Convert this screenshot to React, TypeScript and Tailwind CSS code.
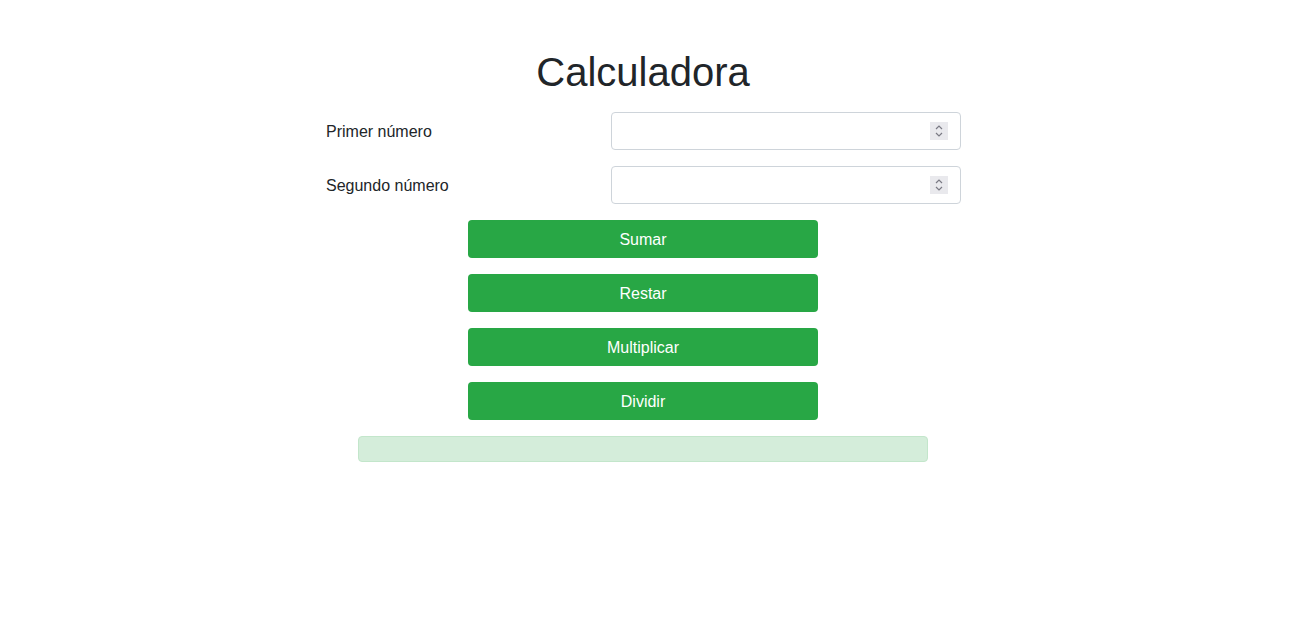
import { useState } from "react";

function NumberField({ value, onChange }: { value: string; onChange: (v: string) => void }) {
  return (
    <div className="relative w-[350px] h-[38px]">
      <input
        type="text"
        value={value}
        onChange={(e) => onChange(e.target.value)}
        className="w-full h-full border border-[#ced4da] rounded-[4px] px-3 text-base text-[#495057] outline-none"
      />
      {/* spinner */}
      <div className="absolute left-[319px] top-[10px] w-[18px] h-[18px] bg-[#e9e9ed] flex items-center justify-center">
        <svg width="10" height="14" viewBox="0 0 10 14" fill="none" stroke="#7a7a84" strokeWidth="1.2">
          <path d="M2 5 L5 2 L8 5" />
          <path d="M2 9 L5 12 L8 9" />
        </svg>
      </div>
    </div>
  );
}

const ops = ["Sumar", "Restar", "Multiplicar", "Dividir"];

export default function App() {
  const [a, setA] = useState("");
  const [b, setB] = useState("");
  const [result, setResult] = useState("");

  const onOp = (op: string) => {
    const x = parseFloat(a);
    const y = parseFloat(b);
    if (isNaN(x) || isNaN(y)) return;
    if (op === "Sumar") setResult(String(x + y));
    if (op === "Restar") setResult(String(x - y));
    if (op === "Multiplicar") setResult(String(x * y));
    if (op === "Dividir") setResult(String(x / y));
  };

  return (
    <div className="min-h-screen bg-white text-[#212529] font-['Liberation_Sans',Arial,sans-serif] flex justify-center pr-[3px]">
      <div className="w-[636px] pt-[48px] flex flex-col">
        <h1 className="text-[40px] leading-[48px] text-center mb-4">Calculadora</h1>
        {/* 입력 행 */}
        <div className="flex items-center justify-between mb-4">
          <label className="text-base leading-6 pt-[2px] pl-px">Primer número</label>
          <NumberField value={a} onChange={setA} />
        </div>
        <div className="flex items-center justify-between mb-4">
          <label className="text-base leading-6 pt-[2px] pl-px">Segundo número</label>
          <NumberField value={b} onChange={setB} />
        </div>
        {/* 버튼 */}
        <div className="flex flex-col items-center gap-4">
          {ops.map((op) => (
            <button
              key={op}
              onClick={() => onOp(op)}
              className="w-[350px] h-[38px] pt-[2px] bg-[#28a745] text-white text-base rounded-[4px]"
            >
              {op}
            </button>
          ))}
        </div>
        {/* 결과 */}
        <div className="flex justify-center mt-4">
          <div className="w-[570px] h-[26px] bg-[#d4edda] border border-[#c3e6cb] rounded-[4px] text-[#155724] text-base leading-6 px-3">
            {result}
          </div>
        </div>
      </div>
    </div>
  );
}
